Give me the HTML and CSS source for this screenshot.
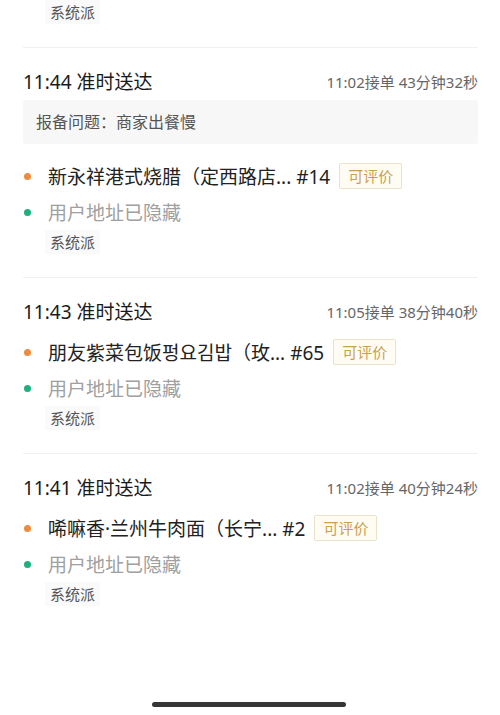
FILE: index.html
```html
<!DOCTYPE html>
<html lang="zh-CN">
<head>
    <meta charset="UTF-8">
    <meta name="viewport" content="width=device-width, initial-scale=1.0">
    <title>历史订单</title>
    <link rel="stylesheet" href="styles.css">
</head>
<body>
    <div class="order-list">
        <!-- tail of the previous order, cut off at the top -->
        <div class="order order-tail">
            <span class="dispatch">系统派</span>
        </div>

        <div class="order">
            <div class="order-head">
                <span class="order-time">11:44 准时送达</span>
                <span class="order-meta">11:02接单 43分钟32秒</span>
            </div>
            <div class="report">报备问题：商家出餐慢</div>
            <ul class="stops">
                <li class="stop">
                    <span class="dot dot-shop"></span>
                    <span class="shop-name">新永祥港式烧腊（定西路店... #14</span>
                    <span class="rate-tag">可评价</span>
                </li>
                <li class="stop">
                    <span class="dot dot-user"></span>
                    <span class="address">用户地址已隐藏</span>
                </li>
            </ul>
            <span class="dispatch">系统派</span>
        </div>

        <div class="order">
            <div class="order-head">
                <span class="order-time">11:43 准时送达</span>
                <span class="order-meta">11:05接单 38分钟40秒</span>
            </div>
            <ul class="stops">
                <li class="stop">
                    <span class="dot dot-shop"></span>
                    <span class="shop-name">朋友紫菜包饭펑요김밥（玫... #65</span>
                    <span class="rate-tag">可评价</span>
                </li>
                <li class="stop">
                    <span class="dot dot-user"></span>
                    <span class="address">用户地址已隐藏</span>
                </li>
            </ul>
            <span class="dispatch">系统派</span>
        </div>

        <div class="order">
            <div class="order-head">
                <span class="order-time">11:41 准时送达</span>
                <span class="order-meta">11:02接单 40分钟24秒</span>
            </div>
            <ul class="stops">
                <li class="stop">
                    <span class="dot dot-shop"></span>
                    <span class="shop-name">唏嘛香·兰州牛肉面（长宁... #2</span>
                    <span class="rate-tag">可评价</span>
                </li>
                <li class="stop">
                    <span class="dot dot-user"></span>
                    <span class="address">用户地址已隐藏</span>
                </li>
            </ul>
            <span class="dispatch">系统派</span>
        </div>
    </div>

    <div class="home-bar"></div>
</body>
</html>
```

FILE: styles.css
```css
body {
    margin: 0;
    background: #fff;
    font-family: "Noto Sans", "Noto Sans CJK SC", sans-serif;
    color: #222;
}
.order-list {
    padding: 0 22px 0 23px;
}
.order {
    display: flex;
    flex-direction: column;
    align-items: flex-start;
    padding: 20px 0 23px;
    border-top: 1px solid #f0f0f0;
}
.order-tail {
    border-top: none;
    padding: 0 0 23px;
}
.order-head {
    align-self: stretch;
    display: flex;
    justify-content: space-between;
    align-items: center;
    height: 26px;
}
.order-time {
    font-size: 19px;
    color: #1a1a1a;
}
.order-meta {
    font-size: 15px;
    color: #666;
}
.report {
    align-self: stretch;
    margin-top: 6px;
    height: 44px;
    line-height: 44px;
    padding-left: 13px;
    background: #f7f7f7;
    border-radius: 3px;
    font-size: 16px;
    color: #555;
}
.report + .stops {
    margin-top: 14px;
}
.stops {
    list-style: none;
    margin: 10px 0 0;
    padding: 0;
}
.stop {
    display: flex;
    align-items: center;
    height: 36px;
}
.dot {
    width: 7px;
    height: 7px;
    border-radius: 50%;
    margin: 0 17px 0 1px;
    flex-shrink: 0;
}
.dot-shop {
    background: #f08a3c;
}
.dot-user {
    background: #1fb07f;
}
.shop-name {
    font-size: 19px;
    color: #222;
    white-space: nowrap;
}
.address {
    font-size: 19px;
    color: #a0a0a0;
}
.rate-tag {
    margin-left: 9px;
    padding: 0 8px;
    height: 24px;
    line-height: 24px;
    font-size: 15px;
    color: #c9a052;
    background: #fffcf3;
    border: 1px solid #ebe2cc;
    border-radius: 2px;
}
.dispatch {
    margin-left: 22px;
    padding: 0 5px;
    height: 24px;
    line-height: 24px;
    font-size: 15px;
    color: #555;
    background: #fafafa;
}
.home-bar {
    position: fixed;
    left: 152px;
    bottom: 8px;
    width: 194px;
    height: 5px;
    border-radius: 3px;
    background: #363636;
}
```
